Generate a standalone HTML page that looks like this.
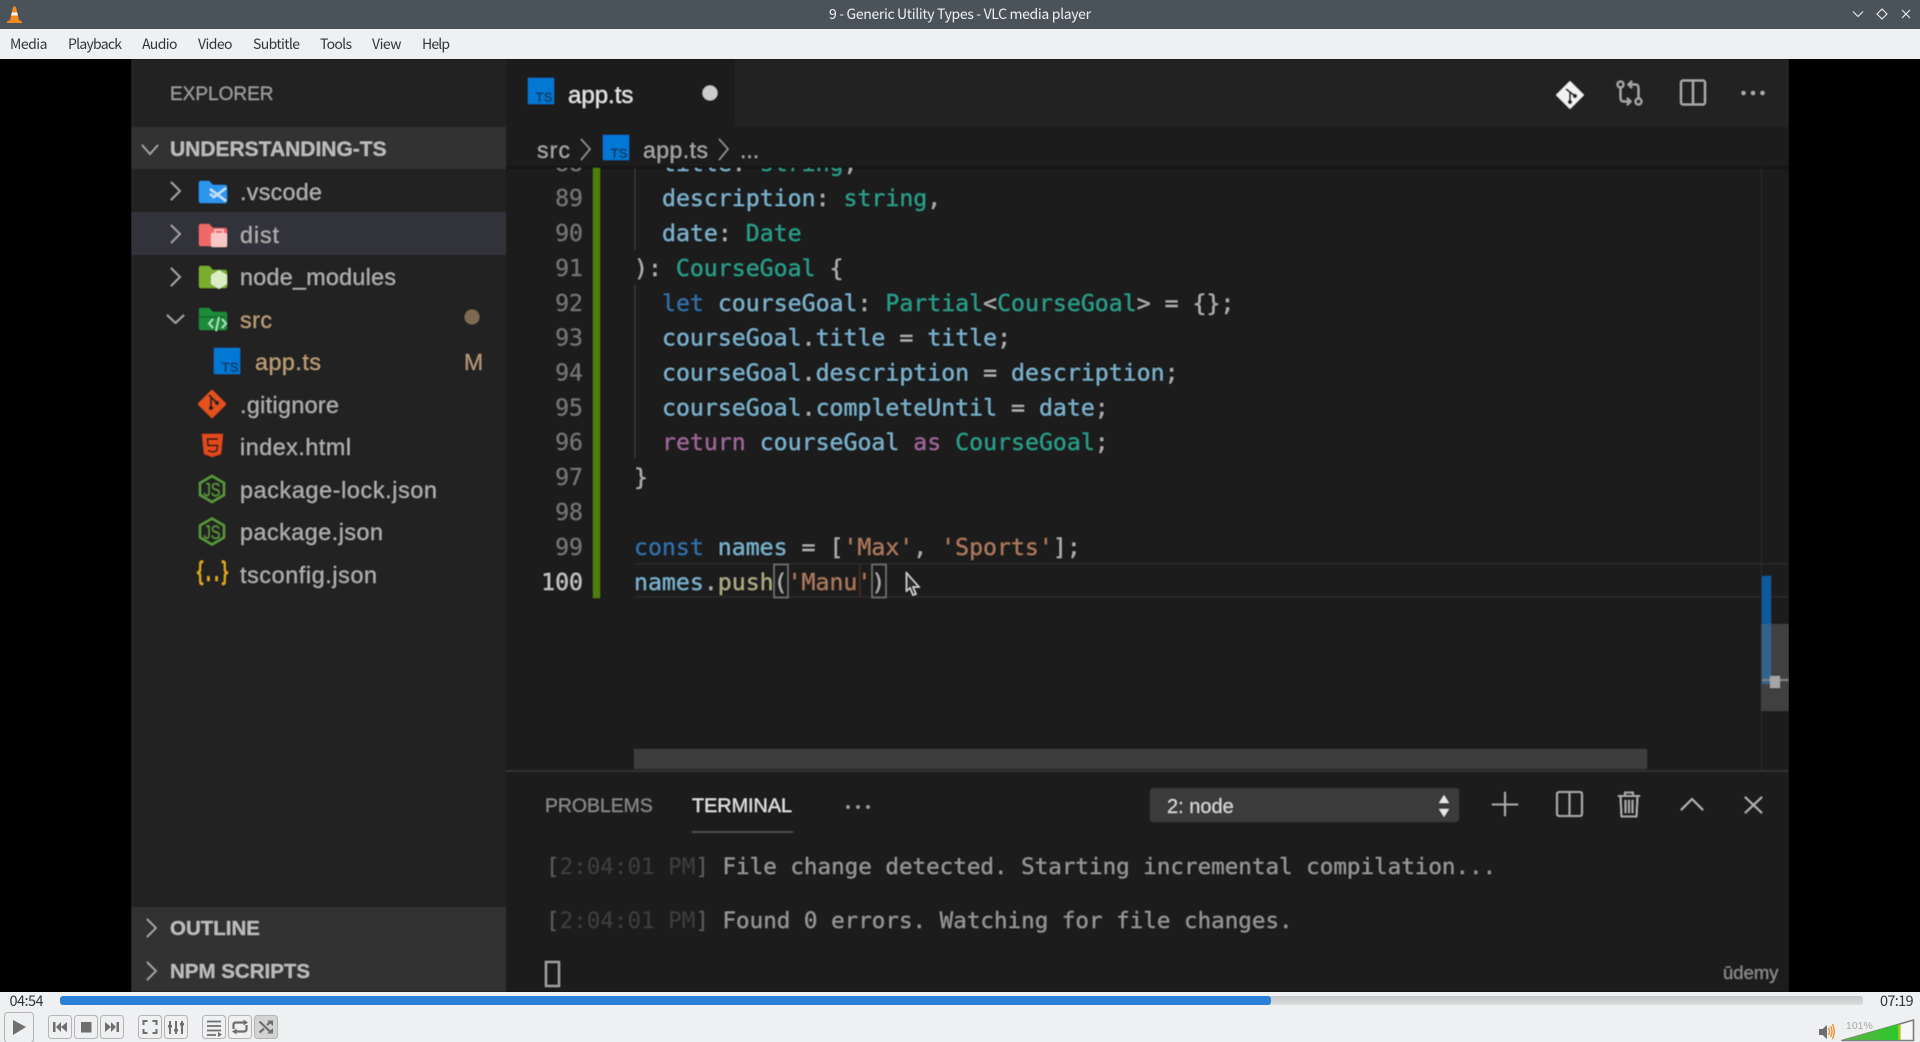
<!DOCTYPE html>
<html><head><meta charset="utf-8"><title>9 - Generic Utility Types - VLC media player</title>
<style>
html,body{margin:0;padding:0;width:1920px;height:1042px;overflow:hidden;background:#000}
svg{position:absolute;left:0;top:0;display:block}
text{white-space:pre;font-family:"Liberation Sans",sans-serif}
.m text,text.m{font-family:"DejaVu Sans Mono",monospace}
.v{fill:#7db4cf}.t{fill:#2a9f8b}.p{fill:#b0b0b0}.k{fill:#3272aa}.r{fill:#a0689a}.s{fill:#ad7a5e}.f{fill:#aeae86}
.ln{fill:#747474}
.tree{font-size:23.3px;fill:#b0b0b0}
.btn{fill:#eff0f1;stroke:#b4b4b4;stroke-width:1}
.ic{fill:#6e6e6e}
text.menu,text.qt{font-family:"Noto Sans CJK SC","Liberation Sans",sans-serif}
.menu{font-size:14px;fill:#31363b}
.ch{fill:none;stroke:#a8a8a8;stroke-width:1.6}
</style></head>
<body>
<svg width="1920" height="1042" viewBox="0 0 1920 1042" xmlns="http://www.w3.org/2000/svg">
<defs>
<filter id="b" x="0" y="0" width="100%" height="100%"><feGaussianBlur stdDeviation="0.6"/></filter>
<linearGradient id="g" x1="0" x2="1" y1="0" y2="0"><stop offset="0" stop-color="#62b048"/><stop offset="1" stop-color="#2ac82a"/></linearGradient>
<linearGradient id="sb" x1="0" x2="0" y1="0" y2="1"><stop offset="0" stop-color="#c4c5c6"/><stop offset="1" stop-color="#dcddde"/></linearGradient>
</defs>

<!-- title bar -->
<rect x="0" y="0" width="1920" height="29" fill="#4a525a"/>
<path d="M7 21.5 L10 20 L13 7 Q14.5 5.5 16 7 L19 20 L22 21.5 L22 23 L7 23Z" fill="#f08a1c"/>
<path d="M11.8 12.5 H17.2 L17.9 15.5 H11.1Z" fill="#f4f4f4"/>
<text class="qt" x="829" y="19" font-size="14" fill="#eff0f1" textLength="262" lengthAdjust="spacing">9 - Generic Utility Types - VLC media player</text>
<path d="M1853 11.5 L1858 16.5 L1863 11.5" fill="none" stroke="#eff0f1" stroke-width="1.1"/>
<path d="M1882 9 L1887 14 L1882 19 L1877 14Z" fill="none" stroke="#eff0f1" stroke-width="1.1"/>
<path d="M1902 10 L1910 18 M1910 10 L1902 18" fill="none" stroke="#eff0f1" stroke-width="1.1"/>

<!-- menu -->
<rect x="0" y="29" width="1920" height="30" fill="#eff0f1"/>
<text class="menu" x="10" y="49" textLength="37.500" lengthAdjust="spacing">Media</text>
<text class="menu" x="68" y="49" textLength="54" lengthAdjust="spacing">Playback</text>
<text class="menu" x="142" y="49" textLength="35.500" lengthAdjust="spacing">Audio</text>
<text class="menu" x="198" y="49" textLength="34.500" lengthAdjust="spacing">Video</text>
<text class="menu" x="253" y="49" textLength="47" lengthAdjust="spacing">Subtitle</text>
<text class="menu" x="320" y="49" textLength="32" lengthAdjust="spacing">Tools</text>
<text class="menu" x="372" y="49" textLength="29.500" lengthAdjust="spacing">View</text>
<text class="menu" x="422" y="49" textLength="28" lengthAdjust="spacing">Help</text>

<!-- video -->
<rect x="0" y="59" width="1920" height="933" fill="#000"/>
<g filter="url(#b)">
<rect x="131" y="59" width="375" height="933" fill="#212121"/>
<rect x="506" y="59" width="1283" height="68" fill="#222222"/>
<rect x="506" y="59" width="229" height="68" fill="#1e1e1e"/>
<rect x="506" y="127" width="1283" height="41" fill="#1f1f1f"/>
<rect x="506" y="168" width="1283" height="603" fill="#1e1e1e"/>
<rect x="506" y="166" width="1283" height="3" fill="#191919"/>
<rect x="506" y="771" width="1283" height="221" fill="#1e1e1e"/>
<rect x="506" y="770" width="1283" height="2" fill="#323232"/>

<!-- sidebar -->
<text x="170" y="100" font-size="19" fill="#9c9c9c">EXPLORER</text>
<rect x="131" y="127" width="375" height="42" fill="#333333"/>
<path d="M142 145 L150 154 L158 145" class="ch"/>
<text x="170" y="156" font-size="21" font-weight="700" fill="#bdbdbd">UNDERSTANDING-TS</text>
<rect x="131" y="212" width="375" height="43" fill="#32323a"/>

<path d="M171 182 L180 191 L171 200" class="ch"/>
<path d="M171 225 L180 234 L171 243" class="ch"/>
<path d="M171 268 L180 277 L171 286" class="ch"/>
<path d="M167 315 L175.500 323 L184 315" class="ch"/>

<!-- vscode folder -->
<path d="M199 183 q0 -2 2 -2 h8 l4 4 h12 q2 0 2 2 v14 q0 2 -2 2 h-24 q-2 0 -2 -2z" fill="#2a96f0"/>
<path d="M226 188 L214 197 L210 194 M210 189 L226 201" fill="none" stroke="#bfe0fb" stroke-width="2.4"/>
<!-- dist folder -->
<path d="M199 226 q0 -2 2 -2 h8 l4 4 h12 q2 0 2 2 v14 q0 2 -2 2 h-24 q-2 0 -2 -2z" fill="#ef6a66"/>
<rect x="211" y="233" width="16" height="14" rx="1.500" fill="#f9c6c6"/>
<path d="M215 233 v-3 h8 v3" fill="none" stroke="#f9c6c6" stroke-width="1.6"/>
<!-- node folder -->
<path d="M199 268 q0 -2 2 -2 h8 l4 4 h12 q2 0 2 2 v14 q0 2 -2 2 h-24 q-2 0 -2 -2z" fill="#79ad2e"/>
<path d="M219 270 L227 275 V284 L219 289 L211 284 V275Z" fill="#d9eec4"/>
<!-- src folder -->
<path d="M199 310 q0 -2 2 -2 h8 l4 4 h12 q2 0 2 2 v14 q0 2 -2 2 h-24 q-2 0 -2 -2z" fill="#1f8c3b"/>
<path d="M199 316 h26 v2 h-26z" fill="#176d2e"/>
<path d="M213 319 L209 323.500 L213 328 M222 319 L226 323.500 L222 328 M219 317 L216 331" fill="none" stroke="#a4e5b6" stroke-width="1.800"/>

<text class="tree" x="240" y="200" textLength="82" lengthAdjust="spacing">.vscode</text>
<text class="tree" x="240" y="243" textLength="39" lengthAdjust="spacing">dist</text>
<text class="tree" x="240" y="285" textLength="156" lengthAdjust="spacing">node_modules</text>
<text x="240" y="328" font-size="23.3" fill="#bd9f78" textLength="32" lengthAdjust="spacing">src</text>
<circle cx="472" cy="317" r="7.500" fill="#7b6a52"/>

<rect x="214" y="348" width="26" height="26" fill="#0278d4"/>
<text x="221.500" y="372" font-size="13.500" font-weight="700" fill="#123a62">TS</text>
<text x="255" y="370" font-size="23.3" fill="#bd9f78" textLength="66" lengthAdjust="spacing">app.ts</text>
<text x="464" y="370" font-size="23" fill="#b49a78">M</text>

<path d="M212 391 L225 404 L212 417 L199 404Z" fill="#e4511f" stroke="#e4511f" stroke-width="2" stroke-linejoin="round"/>
<path d="M209 395 L217 403 M211 398 V408" stroke="#212121" stroke-width="2" fill="none"/>
<circle cx="211" cy="408" r="2.200" fill="#212121"/><circle cx="217" cy="403" r="2.200" fill="#212121"/>
<text class="tree" x="240" y="413" textLength="99" lengthAdjust="spacing">.gitignore</text>

<path d="M202 434 H223 L221 454 L212.500 457 L204 454Z" fill="#e2491f"/>
<path d="M218 439 H207.500 L208 445.500 H217.500 L217 450.500 L212.500 452 L208 450.500" fill="none" stroke="#2a1a14" stroke-width="1.700"/>
<text class="tree" x="240" y="455" textLength="111" lengthAdjust="spacing">index.html</text>

<g fill="none" stroke="#5b9a3a" stroke-width="2.200" stroke-linejoin="round">
<path d="M212 476 L224 483 V495 L212 502 L200 495 V483Z"/>
<path d="M212 518.500 L224 525.500 V537.500 L212 544.500 L200 537.500 V525.500Z"/>
</g>
<text x="203.500" y="496.500" font-size="19" fill="#5b9a3a" textLength="17" lengthAdjust="spacingAndGlyphs">JS</text>
<text x="203.500" y="539" font-size="19" fill="#5b9a3a" textLength="17" lengthAdjust="spacingAndGlyphs">JS</text>
<text class="tree" x="240" y="498" textLength="197" lengthAdjust="spacing">package-lock.json</text>
<text class="tree" x="240" y="540" textLength="143" lengthAdjust="spacing">package.json</text>
<text x="196" y="581" font-size="27" font-weight="700" fill="#e4ae1e" class="m" textLength="33" lengthAdjust="spacingAndGlyphs">{..}</text>
<text class="tree" x="240" y="583" textLength="137" lengthAdjust="spacing">tsconfig.json</text>

<rect x="131" y="907" width="375" height="85" fill="#333333"/>
<path d="M147 919 L156 928 L147 937 M147 962 L156 971 L147 980" class="ch"/>
<text x="170" y="935" font-size="20.500" font-weight="700" fill="#bdbdbd">OUTLINE</text>
<text x="170" y="978" font-size="20.500" font-weight="700" fill="#bdbdbd">NPM SCRIPTS</text>

<!-- tab -->
<rect x="528" y="78" width="26" height="26" fill="#0278d4"/>
<text x="535.500" y="102" font-size="13.500" font-weight="700" fill="#123a62">TS</text>
<text x="568" y="103" font-size="24" fill="#e6e6e6">app.ts</text>
<circle cx="710" cy="93" r="7.500" fill="#cccccc"/>

<!-- top right icons -->
<path d="M1570 82 L1583 95 L1570 108 L1557 95Z" fill="#f2f2f2" stroke="#f2f2f2" stroke-width="1.500" stroke-linejoin="round"/>
<path d="M1566 89 L1575 96 M1570 92 V102" stroke="#222" stroke-width="2" fill="none"/>
<circle cx="1570" cy="102" r="2.200" fill="#222"/><circle cx="1575" cy="96" r="2.200" fill="#222"/>
<g fill="none" stroke="#a8a8a8" stroke-width="2">
<circle cx="1620.500" cy="84.500" r="3"/><circle cx="1638.500" cy="101.500" r="3"/>
<path d="M1620.500 88 V98 Q1620.500 101.500 1624 101.500 H1630 M1627 98 L1630.500 101.500 L1627 105"/>
<path d="M1638.500 98 V88 Q1638.500 84.500 1635 84.500 H1629 M1632 81 L1628.500 84.500 L1632 88"/>
<rect x="1681" y="80.500" width="24" height="24" rx="2"/><path d="M1693 80.500 V104.500"/>
</g>
<g fill="#b0b0b0"><circle cx="1743.500" cy="93" r="2"/><circle cx="1753" cy="93" r="2"/><circle cx="1762.500" cy="93" r="2"/></g>

<!-- breadcrumb -->
<text x="537" y="158" font-size="23" fill="#a6a6a6" textLength="33" lengthAdjust="spacing">src</text>
<path d="M581 139 L590 149 L581 160" fill="none" stroke="#9a9a9a" stroke-width="1.300"/>
<rect x="603" y="135" width="26" height="25" fill="#0278d4"/>
<text x="610.500" y="158" font-size="13.500" font-weight="700" fill="#123a62">TS</text>
<text x="643" y="158" font-size="23" fill="#a6a6a6" textLength="65" lengthAdjust="spacing">app.ts</text>
<path d="M719 139 L728 149 L719 160" fill="none" stroke="#9a9a9a" stroke-width="1.300"/>
<text x="740" y="158" font-size="23" fill="#a6a6a6">...</text>

<!-- editor -->
<rect x="593" y="168" width="7" height="430" fill="#4f7e0e"/>
<path d="M635 168 V250 M635 285 V458" stroke="#3c3c3c" stroke-width="1"/>
<rect x="635" y="563" width="1154" height="1.500" fill="#2a2a2a"/>
<rect x="635" y="596" width="1154" height="1.500" fill="#2a2a2a"/>

<svg x="506" y="168" width="1283" height="430" viewBox="506 168 1283 430" overflow="hidden">
<g class="m" font-size="23.200">
<text x="662" y="171"><tspan class="v">title</tspan><tspan class="p">: </tspan><tspan class="t">string</tspan><tspan class="p">,</tspan></text>
<text x="662" y="206"><tspan class="v">description</tspan><tspan class="p">: </tspan><tspan class="t">string</tspan><tspan class="p">,</tspan></text>
<text x="662" y="241"><tspan class="v">date</tspan><tspan class="p">: </tspan><tspan class="t">Date</tspan></text>
<text x="634" y="276"><tspan class="p">): </tspan><tspan class="t">CourseGoal</tspan><tspan class="p"> {</tspan></text>
<text x="662" y="311"><tspan class="k">let</tspan><tspan class="v"> courseGoal</tspan><tspan class="p">: </tspan><tspan class="t">Partial</tspan><tspan class="p">&lt;</tspan><tspan class="t">CourseGoal</tspan><tspan class="p">&gt; = {};</tspan></text>
<text x="662" y="345.500"><tspan class="v">courseGoal</tspan><tspan class="p">.</tspan><tspan class="v">title</tspan><tspan class="p"> = </tspan><tspan class="v">title</tspan><tspan class="p">;</tspan></text>
<text x="662" y="380.500"><tspan class="v">courseGoal</tspan><tspan class="p">.</tspan><tspan class="v">description</tspan><tspan class="p"> = </tspan><tspan class="v">description</tspan><tspan class="p">;</tspan></text>
<text x="662" y="415.500"><tspan class="v">courseGoal</tspan><tspan class="p">.</tspan><tspan class="v">completeUntil</tspan><tspan class="p"> = </tspan><tspan class="v">date</tspan><tspan class="p">;</tspan></text>
<text x="662" y="450"><tspan class="r">return</tspan><tspan class="v"> courseGoal </tspan><tspan class="r">as</tspan> <tspan class="t">CourseGoal</tspan><tspan class="p">;</tspan></text>
<text x="634" y="485"><tspan class="p">}</tspan></text>
<text x="634" y="555"><tspan class="k">const</tspan><tspan class="v"> names </tspan><tspan class="p">= [</tspan><tspan class="s">'Max'</tspan><tspan class="p">, </tspan><tspan class="s">'Sports'</tspan><tspan class="p">];</tspan></text>
<text x="634" y="590"><tspan class="v">names</tspan><tspan class="p">.</tspan><tspan class="f">push</tspan><tspan class="p">(</tspan><tspan class="s">'Manu'</tspan><tspan class="p">)</tspan></text>
</g>
<g class="m" font-size="23.200" text-anchor="end">
<text class="ln" x="583" y="171">88</text>
<text class="ln" x="583" y="206">89</text>
<text class="ln" x="583" y="241">90</text>
<text class="ln" x="583" y="276">91</text>
<text class="ln" x="583" y="311">92</text>
<text class="ln" x="583" y="345.500">93</text>
<text class="ln" x="583" y="380.500">94</text>
<text class="ln" x="583" y="415.500">95</text>
<text class="ln" x="583" y="450">96</text>
<text class="ln" x="583" y="485">97</text>
<text class="ln" x="583" y="520">98</text>
<text class="ln" x="583" y="555">99</text>
<text x="583" y="590" fill="#c4c4c4">100</text>
</g>
</svg>
<rect x="774" y="564.500" width="14" height="33" fill="none" stroke="#777" stroke-width="1.300"/>
<rect x="872" y="564.500" width="14" height="33" fill="none" stroke="#777" stroke-width="1.300"/>
<rect x="859" y="565" width="1.500" height="32" fill="#4a2a22"/>
<path d="M906.500 573 V591 L910 588 L913 595 L916 594 L913 587 L919 587Z" fill="#2a2a2a" stroke="#e0e0e0" stroke-width="1.200"/>

<!-- overview ruler / scrollbars -->
<rect x="1761" y="168" width="1" height="602" fill="#2a2a2a"/>
<rect x="1761" y="624" width="28" height="87" fill="#3f3f3f"/>
<rect x="1762" y="576" width="9" height="48" fill="#0b5a9c"/>
<rect x="1762" y="624" width="9" height="60" fill="#33648f"/>
<rect x="1762" y="679" width="27" height="2" fill="#76828c"/>
<rect x="1770" y="676" width="10" height="12" fill="#a4a4a4"/>
<rect x="634" y="749" width="1013" height="20" fill="#3c3c3c"/>

<!-- panel -->
<text x="545" y="812" font-size="19.400" fill="#888888">PROBLEMS</text>
<text x="692" y="812" font-size="19.800" fill="#e4e4e4">TERMINAL</text>
<rect x="692" y="831" width="101" height="2" fill="#4a4a4a"/>
<g fill="#a0a0a0"><circle cx="848" cy="807" r="1.700"/><circle cx="858" cy="807" r="1.700"/><circle cx="868" cy="807" r="1.700"/></g>
<rect x="1150" y="788" width="309" height="34" rx="3" fill="#3a3a3a"/>
<text x="1167" y="813" font-size="20" fill="#d8d8d8">2: node</text>
<path d="M1444 795 L1449 803 H1439Z M1444 817 L1449 809 H1439Z" fill="#e8e8e8"/>
<g fill="none" stroke="#b8b8b8" stroke-width="1.600">
<path d="M1505 792 V816 M1492 804.500 H1518"/>
<rect x="1557" y="792" width="25" height="24" rx="2"/><path d="M1569.500 792 V816"/>
<path d="M1618 796 H1640 M1625 796 V792.500 H1633 V796 M1620.500 796 L1621.500 816.500 H1636.500 L1637.500 796 M1625.500 800 V813 M1629 800 V813 M1632.500 800 V813"/>
<path d="M1681 810 L1692 799 L1703 810"/>
<path d="M1745 797 L1762 813 M1762 797 L1745 813"/>
</g>
<g class="m" font-size="22.550">
<text x="546" y="874"><tspan fill="#5a5a5a">[</tspan><tspan fill="#3e3e3e">2:04:01 PM</tspan><tspan fill="#5a5a5a">]</tspan><tspan fill="#979797"> File change detected. Starting incremental compilation...</tspan></text>
<text x="546" y="928"><tspan fill="#5a5a5a">[</tspan><tspan fill="#3e3e3e">2:04:01 PM</tspan><tspan fill="#5a5a5a">]</tspan><tspan fill="#979797"> Found 0 errors. Watching for file changes.</tspan></text>
</g>
<rect x="546" y="962" width="13" height="24" fill="none" stroke="#a0a0a0" stroke-width="2"/>
<text x="1723" y="979" font-size="18.500" fill="#8c8c8c">ūdemy</text>
</g>

<!-- controls -->
<rect x="0" y="992" width="1920" height="50" fill="#eff0f1"/>
<text class="qt" x="9.500" y="1006" font-size="14.500" fill="#31363b" textLength="34" lengthAdjust="spacing">04:54</text>
<text class="qt" x="1880" y="1006" font-size="14.500" fill="#31363b" textLength="33.500" lengthAdjust="spacing">07:19</text>
<rect x="60" y="996" width="1803" height="9" rx="3" fill="url(#sb)"/>
<rect x="60" y="996" width="1211" height="9" rx="3" fill="#2a7fd6"/>

<rect class="btn" x="4.500" y="1012.500" width="29" height="30" rx="3"/>
<path d="M13 1020 L26 1027 L13 1035Z" class="ic"/>
<rect class="btn" x="48.500" y="1015.500" width="23" height="23" rx="3"/>
<path d="M53 1022 h2.500 v10 h-2.500z M56 1027 L61 1022 V1032Z M61 1027 L67 1022 V1032Z" class="ic"/>
<rect class="btn" x="74.500" y="1015.500" width="23" height="23" rx="3"/>
<rect x="81" y="1022" width="10.500" height="10.500" class="ic"/>
<rect class="btn" x="100.500" y="1015.500" width="23" height="23" rx="3"/>
<path d="M105 1022 L111 1027 L105 1032Z M111 1022 L116 1027 L111 1032Z M116.500 1022 h2.500 v10 h-2.500z" class="ic"/>
<rect class="btn" x="138.500" y="1015.500" width="23" height="23" rx="3"/>
<path d="M143.500 1025 V1021 H147.500 M152.500 1021 H156.500 V1025 M156.500 1029 V1033 H152.500 M147.500 1033 H143.500 V1029" fill="none" stroke="#6e6e6e" stroke-width="2"/>
<rect class="btn" x="164.500" y="1015.500" width="23" height="23" rx="3"/>
<path d="M170 1021 V1034 M176 1021 V1034 M182 1021 V1034" stroke="#6e6e6e" stroke-width="2" fill="none"/>
<path d="M168 1025 h4 v2.500 h-4z M174 1029 h4 v2.500 h-4z M180 1023 h4 v2.500 h-4z" class="ic"/>
<rect class="btn" x="202.500" y="1015.500" width="23" height="23" rx="3"/>
<path d="M207 1021.500 H221 M207 1026 H221 M207 1030.500 H221 M207 1035 H216" stroke="#6e6e6e" stroke-width="1.800" fill="none"/>
<path d="M218 1032 L222 1034.500 L218 1037Z" class="ic"/>
<rect class="btn" x="228.500" y="1015.500" width="23" height="23" rx="3"/>
<path d="M233.500 1029 V1025 Q233.500 1022.500 236 1022.500 H245 M246.500 1025 V1029 Q246.500 1031.500 244 1031.500 H235" fill="none" stroke="#6e6e6e" stroke-width="2.200"/>
<path d="M243.500 1019.500 L248 1022.500 L243.500 1025.500Z M236.500 1028.500 L232 1031.500 L236.500 1034.500Z" class="ic"/>
<rect x="254.500" y="1015.500" width="23" height="23" rx="3" fill="#d2d3d4" stroke="#b4b4b4"/>
<path d="M259.500 1021.500 L271 1032.500 M259.500 1032.500 L264 1028.500 M267 1025 L271 1021.500" fill="none" stroke="#6e6e6e" stroke-width="2.200"/>
<path d="M267 1020.500 H273 V1026Z M267 1033.500 H273 V1028Z" class="ic"/>

<path d="M1819 1029 h3.500 l4.500 -4 v14 l-4.500 -4 h-3.500z" fill="#6e6e6e"/>
<path d="M1828.500 1028 q2 3.500 0 7 M1830.500 1026 q3 5.500 0 11 M1832.500 1024 q3.500 7.500 0 15" fill="none" stroke="#f08a1c" stroke-width="1.300"/>
<path d="M1842 1040.500 L1913.500 1020 V1040.500Z" fill="#f8f8f8" stroke="#7c7c7c" stroke-width="1.600" stroke-linejoin="round"/>
<path d="M1843 1040 L1899 1024 V1040Z" fill="url(#g)"/>
<rect x="1898" y="1024.500" width="2.500" height="15.500" fill="#9fc218"/>
<text x="1846" y="1029" font-size="10.500" fill="#a8a8a8">101%</text>
</svg>
</body></html>
